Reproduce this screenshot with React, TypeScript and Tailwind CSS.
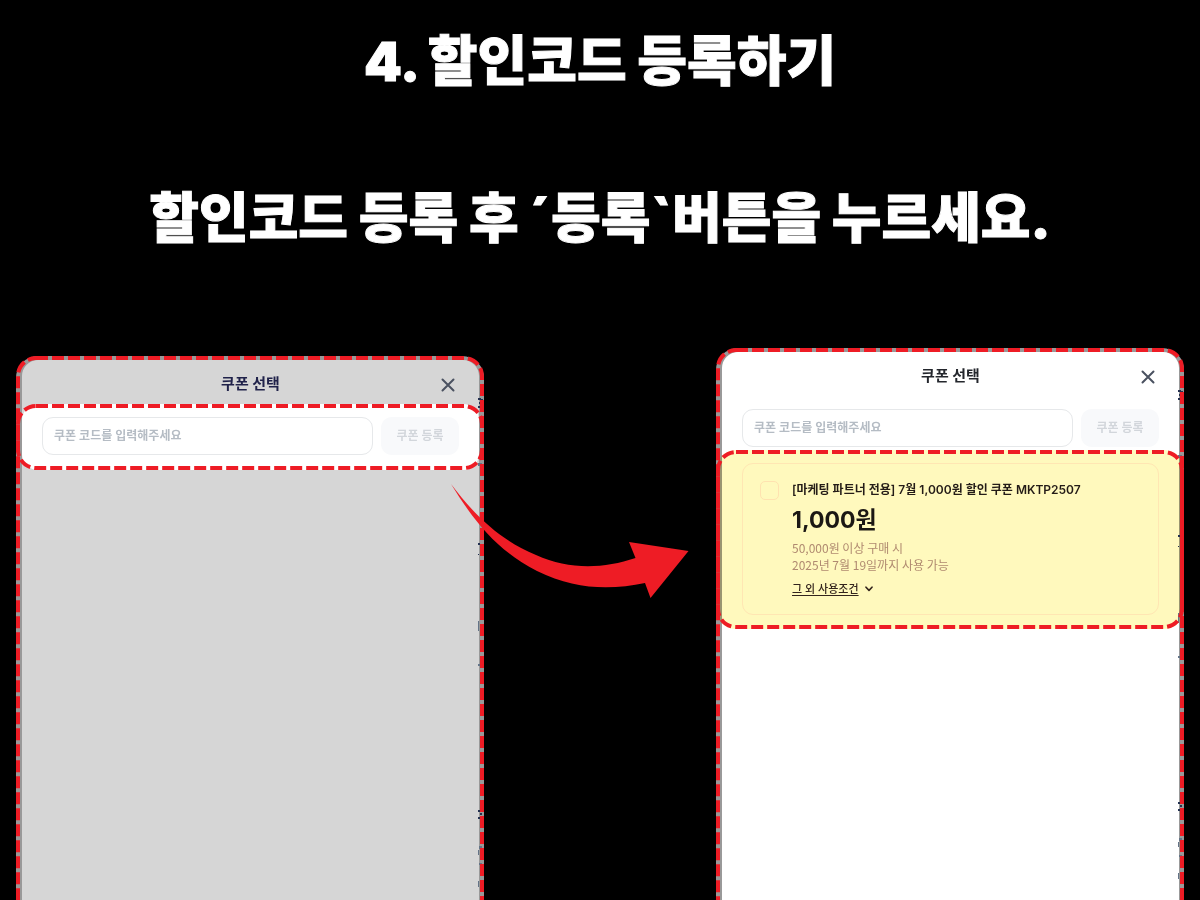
import type { ReactNode } from "react";

function DashedOutline({ radius }: { radius: number }) {
  return (
    <svg className="pointer-events-none absolute inset-0 h-full w-full" aria-hidden="true">
      <rect
        x="2"
        y="2"
        rx={radius}
        className="h-[calc(100%-4px)] w-[calc(100%-4px)]"
        fill="none"
        stroke="#ee1c25"
        strokeWidth="4"
        strokeDasharray="12 4"
      />
    </svg>
  );
}

function Specks() {
  return (
    <svg className="pointer-events-none absolute top-0 right-0 h-full w-1.5" aria-hidden="true">
      <g fill="#23304f">
        <path d="M0 42h3v2h-3zM1 46h2v2h-2zM0 50h2v2h-2zM3 43h2v1h-2z" />
        <path d="M0 187h2v2h-2zM0 198h1v1h-1z" />
        <path d="M0 454h2v2h-2zM2 457h2v2h-2zM0 461h2v2h-2z" />
      </g>
      <g fill="#647487">
        <path d="M0 107h4v3h-4zM0 265h1v10h-1zM0 308h2v2h-2zM1 490h3v3h-3zM0 494h1v5h-1zM1 507h3v2h-3zM0 525h1v6h-1z" />
      </g>
    </svg>
  );
}

function Panel({ tone, offset, children }: { tone: string; offset: string; children: ReactNode }) {
  return (
    <section className={`relative flex flex-col rounded-t-[22px] bg-[#999] pt-1 pr-[5px] pl-1.5 ${offset}`}>
      <div className={`flex flex-1 flex-col rounded-t-[16px] ${tone}`}>{children}</div>
      <div className="pointer-events-none absolute inset-x-0 top-0 -bottom-8">
        <Specks />
        <DashedOutline radius={18} />
      </div>
    </section>
  );
}

function Header({ color }: { color: string }) {
  return (
    <header className="relative flex h-11 shrink-0 items-center justify-center pt-1">
      <h2 className={`text-[15px] leading-5 font-bold ${color}`}>쿠폰 선택</h2>
      <button type="button" aria-label="닫기" className="absolute top-[18px] right-6 text-[#4a5160]">
        <svg width="14" height="14" viewBox="0 0 14 14" fill="none" stroke="currentColor" strokeWidth="2" strokeLinecap="round">
          <path d="M1.5 1.5 12.5 12.5M12.5 1.5 1.5 12.5" />
        </svg>
      </button>
    </header>
  );
}

function CodeForm() {
  return (
    <form className="flex gap-2 px-5 pt-[13px]" onSubmit={(e) => e.preventDefault()}>
      <input
        type="text"
        aria-label="쿠폰 코드"
        placeholder="쿠폰 코드를 입력해주세요"
        className="h-[38px] min-w-0 flex-1 rounded-[11px] border border-[#e6e8ea] bg-white px-[11px] pb-0.5 text-xs font-semibold outline-none placeholder:text-[#b5bcc4]"
      />
      <button type="submit" className="h-[38px] w-[78px] rounded-[11px] bg-[#f8f9fb] text-xs font-bold text-[#d2d6db]">
        쿠폰 등록
      </button>
    </form>
  );
}

function CouponCard() {
  return (
    <article className="relative mx-5 flex h-[152px] rounded-[11px] border border-[#ffe6b3] pt-[17px] pl-[17px]">
      <input
        id="coupon"
        type="checkbox"
        className="h-[19px] w-[19px] shrink-0 appearance-none rounded-[5px] border border-[#ffe2b0]"
      />
      <div className="ml-[13px] flex min-w-0 flex-col items-start">
        <label htmlFor="coupon" className="text-xs leading-[18px] font-semibold whitespace-nowrap text-[#241c17]">
          [마케팅 파트너 전용] 7월 1,000원 할인 쿠폰 MKTP2507
        </label>
        <strong className="mt-[3px] text-[23px] leading-9 font-bold text-[#1c1814]">1,000원</strong>
        <p className="mt-px font-['Noto_Sans_CJK_KR',sans-serif] text-xs leading-[17px] text-[#b08a70]">
          50,000원 이상 구매 시
          <br />
          2025년 7월 19일까지 사용 가능
        </p>
        <button type="button" className="mt-[7px] flex items-center gap-1.5 text-[11px] leading-[18px] font-medium text-[#33241c]">
          <span className="underline underline-offset-2">그 외 사용조건</span>
          <svg width="8" height="6" viewBox="0 0 8 6" fill="none" stroke="currentColor" strokeWidth="1.6" strokeLinecap="round" strokeLinejoin="round">
            <path d="M1 1.2 4 4.4 7 1.2" />
          </svg>
        </button>
      </div>
    </article>
  );
}

export default function App() {
  return (
    <main className="flex h-screen flex-col overflow-hidden bg-black font-['Inter','Noto_Sans_CJK_KR',sans-serif]">
      <div className="flex h-[348px] shrink-0 flex-col items-center pt-[22px] text-[54px] leading-[80px] font-black whitespace-nowrap text-white [-webkit-text-stroke:1px_white]">
        <h1>4. 할인코드 등록하기</h1>
        <p className="mt-[77px]">할인코드 등록 후 ´등록`버튼을 누르세요.</p>
      </div>

      <div className="relative grid flex-1 grid-cols-[117fr_117fr] gap-x-[232px] px-4">
        <Panel tone="bg-[#d6d6d6]" offset="mt-2">
          <Header color="text-[#20224a]" />
          <div className="relative h-[66px] rounded-[16px] bg-white">
            <CodeForm />
            <div className="pointer-events-none absolute inset-y-0 -right-[5px] -left-1.5 z-10">
              <DashedOutline radius={18} />
            </div>
          </div>
        </Panel>

        <Panel tone="bg-white" offset="">
          <Header color="text-[#24272d]" />
          <div className="h-[54px]">
            <CodeForm />
          </div>
          <div className="relative h-[179px] pt-[13px]">
            <div className="absolute inset-y-0 -right-[5px] -left-1.5 rounded-[20px] bg-[#fff9bd] mix-blend-multiply" />
            <CouponCard />
            <div className="pointer-events-none absolute inset-y-0 -right-[5px] -left-1.5 z-10">
              <DashedOutline radius={18} />
            </div>
          </div>
        </Panel>

        <svg
          className="pointer-events-none absolute top-[136px] left-1/2 -ml-[149px]"
          width="238"
          height="115"
          viewBox="0 0 238 115"
          fill="#ee1c25"
          aria-hidden="true"
        >
          <path d="M0 0C27 36 52 57 85 71C118 86 152 85 184.500 74L178 58L237.500 67L199.500 114L194 99C160 106 124 106 86 87C47 67 24 39 0 0Z" />
        </svg>
      </div>
    </main>
  );
}
